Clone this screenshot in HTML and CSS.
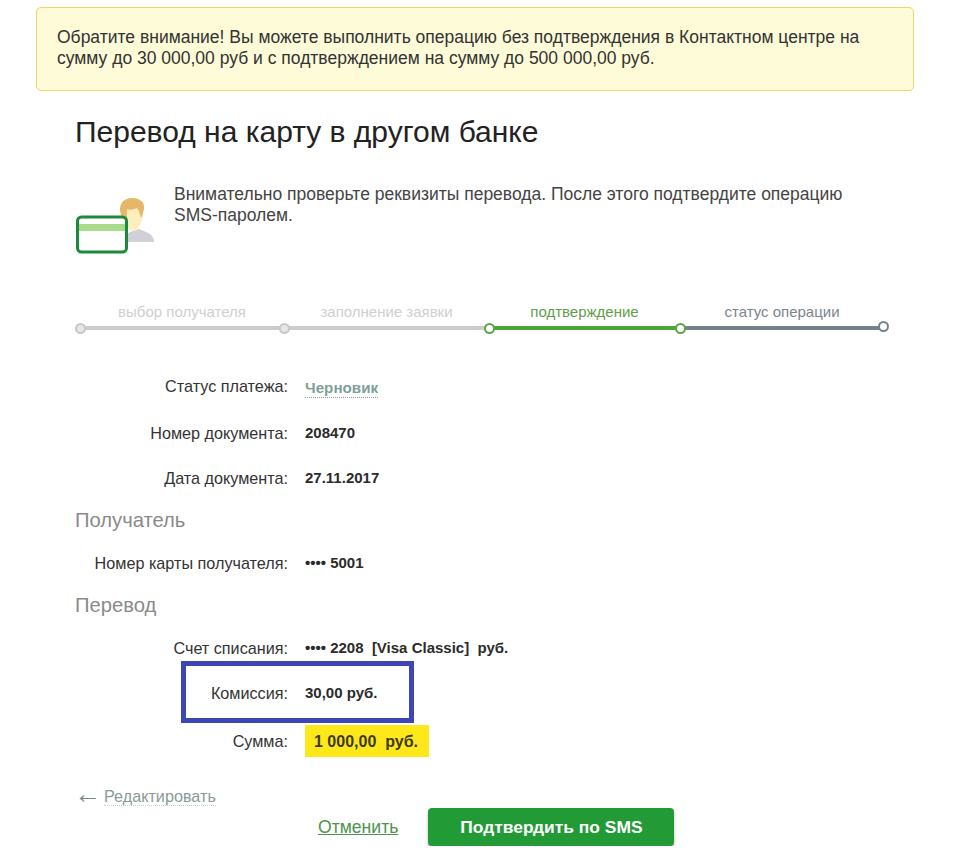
FILE: index.html
```html
<!DOCTYPE html>
<html lang="en">
  <head>
    <meta charset="UTF-8" />
    <title>Перевод на карту в другом банке</title>
    <link rel="stylesheet" href="styles.css">
  </head>
  <body>
    <div class="notice">
      Обратите внимание! Вы можете выполнить операцию без подтверждения в Контактном центре на
      сумму до 30 000,00 руб и с подтверждением на сумму до 500 000,00 руб.
    </div>
    <div class="container">
      <h1>Перевод на карту в другом банке</h1>
      <div class="intro">
        <svg class="intro-icon" width="82" height="62" viewBox="0 0 82 62">
          <path d="M48 47c0-6 4-9 10-11l6-2 7 3c5 2 8 5 8 10z" fill="#cfd1d6" />
          <path d="M49 17c0-8 4-12 9-12s10 4 10 12c0 10-5 19-10 19s-9-9-9-19z" fill="#fbf0bd" />
          <path d="M52 32c-2-3-4-7-6-12-3-9 1-17 11-17 8 0 13 4 12 11-1 3-1 6-3 9-1-4-2-8-4-10-4 2-7 2-10 1 0 6-1 12 0 18z" fill="#e6b768" />
          <rect x="2.5" y="22" width="49" height="35" rx="4" fill="#fff" stroke="#1c8a3a" stroke-width="3" />
          <rect x="4" y="29" width="46" height="7" fill="#a8dc8c" />
        </svg>
        <p>Внимательно проверьте реквизиты перевода. После этого подтвердите операцию SMS-паролем.</p>
      </div>

      <div class="steps">
        <div class="step done"><span>выбор получателя</span><i></i></div>
        <div class="step done"><span>заполнение заявки</span><i></i></div>
        <div class="step active"><span>подтверждение</span><i></i></div>
        <div class="step next"><span>статус операции</span><i></i><b></b></div>
      </div>

      <div class="row first">
        <div class="label">Статус платежа:</div>
        <div class="value"><a class="status">Черновик</a></div>
      </div>
      <div class="row">
        <div class="label">Номер документа:</div>
        <div class="value">208470</div>
      </div>
      <div class="row">
        <div class="label">Дата документа:</div>
        <div class="value">27.11.2017</div>
      </div>
      <h2>Получатель</h2>
      <div class="row">
        <div class="label">Номер карты получателя:</div>
        <div class="value">•••• 5001</div>
      </div>
      <h2>Перевод</h2>
      <div class="row">
        <div class="label">Счет списания:</div>
        <div class="value">•••• 2208&nbsp; [Visa Classic]&nbsp; руб.</div>
      </div>
      <div class="row marked">
        <div class="label">Комиссия:</div>
        <div class="value">30,00 руб.</div>
        <div class="mark"></div>
      </div>
      <div class="row total">
        <div class="label">Сумма:</div>
        <div class="value sum">1 000,00&nbsp; руб.</div>
      </div>

      <div class="edit"><span class="arrow">←</span><a>Редактировать</a></div>
      <div class="buttons">
        <a class="cancel">Отменить</a>
        <button>Подтвердить по SMS</button>
      </div>
    </div>
  </body>
</html>
```

FILE: styles.css
```css
body {
  margin: 0;
  background: #fff;
  color: #2b2b2b;
  font-family: "Liberation Sans", Arial, sans-serif;
}
.notice {
  box-sizing: border-box;
  width: 878px;
  height: 84px;
  margin: 7px 0 0 36px;
  padding: 19px 20px 0;
  background: #fdfbd8;
  border: 1px solid #ecd96a;
  border-radius: 5px;
  font-size: 17.5px;
  line-height: 21px;
  color: #333;
}
.container {
  padding-left: 75px;
  width: 815px;
}
h1 {
  margin: 23px 0 0;
  font-size: 30px;
  line-height: 36px;
  font-weight: normal;
  color: #222;
}
.intro {
  display: flex;
  height: 119px;
  margin-top: 34px;
}
.intro-icon {
  margin-top: 11px;
  flex-shrink: 0;
}
.intro p {
  margin: 0 0 0 17px;
  width: 690px;
  font-size: 17.5px;
  line-height: 21px;
  color: #444;
}
.steps {
  display: grid;
  grid-template-columns: 204px 205px 191px 204px;
  margin-left: 5px;
}
.step {
  position: relative;
  text-align: center;
  font-size: 15px;
  line-height: 18px;
  padding-bottom: 9px;
}
.step i {
  position: absolute;
  left: 0;
  right: 0;
  bottom: 0;
  height: 4px;
}
.step i::before, .step b {
  content: "";
  position: absolute;
  box-sizing: border-box;
  left: -5px;
  top: -3px;
  width: 11px;
  height: 11px;
  background: #fff;
  border: 2px solid;
  border-radius: 50%;
  z-index: 1;
}
.step b {
  left: auto;
  right: -5px;
  bottom: -2px;
  top: auto;
  border-color: #75828c;
}
.done { color: #cfcfcf; }
.done i { background: #cccccc; }
.done i::before { border-color: #c8c8c8; background: #e6e6e6; }
.active { color: #5f9e4a; }
.active i { background: #4aa635; }
.active i::before { border-color: #5aa348; }
.next { color: #7c868d; }
.next i { background: #75828c; }
.next i::before { border-color: #5aa348; }
.row {
  position: relative;
  display: flex;
  gap: 17px;
  margin-top: 27px;
  font-size: 16.2px;
  line-height: 18px;
}
.row.first { margin-top: 47px; }
.row.total { margin-top: 30px; }
.label {
  width: 213px;
  text-align: right;
  color: #333;
}
.value {
  font-size: 15px;
  font-weight: bold;
  color: #2b2b2b;
}
.first .value { padding-top: 2px; }
.status {
  color: #7f9f9a;
  font-size: 15.2px;
  border-bottom: 1px dotted #7f9f9a;
  padding-bottom: 1px;
}
h2 {
  margin: 22px 0 0;
  font-size: 20.2px;
  line-height: 22px;
  font-weight: normal;
  color: #8a8a8a;
}
h2 + .row { margin-top: 23px; }
.mark {
  position: absolute;
  left: 106px;
  top: -23px;
  box-sizing: border-box;
  width: 233px;
  height: 62px;
  border: 5px solid #3c46b4;
}
.sum {
  margin-top: -7px;
  padding: 8px 11px 6px 9px;
  background: #ffe81a;
  font-size: 16px;
  color: #3d3a10;
}
.edit {
  display: flex;
  align-items: center;
  margin: 30px 0 0 -1px;
  font-size: 16.2px;
  line-height: 18px;
  color: #8a9a98;
}
.arrow {
  font-size: 27px;
  line-height: 18px;
  margin-top: -5px;
  margin-right: 3px;
  color: #7d8a88;
}
.edit a { border-bottom: 1px dotted #c5cfcd; }
.buttons {
  display: flex;
  align-items: center;
  gap: 30px;
  margin: 2px 0 0 243px;
}
.cancel {
  color: #4f9350;
  font-size: 17.6px;
  text-decoration: underline;
}
button {
  width: 246px;
  height: 38px;
  background: #229b37;
  color: #fff;
  border: 0;
  border-radius: 4px;
  box-shadow: 0 2px 3px rgba(0, 0, 0, 0.3);
  font-family: inherit;
  font-size: 17.4px;
  font-weight: bold;
}
```
